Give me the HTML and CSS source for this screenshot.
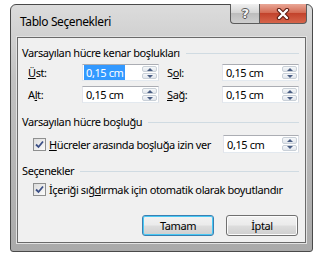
FILE: index.html
```html
<!DOCTYPE html>
<html lang="tr">

<head>
    <meta charset="UTF-8">
    <title>Tablo Seçenekleri</title>
    <link rel="stylesheet" href="styles.css">
</head>

<body>
    <div class="window">
        <div class="titlebar">
            <span class="title">Tablo Seçenekleri</span>
            <div class="caption-buttons">
                <span class="cap help">?</span>
                <span class="cap close">
                    <svg width="16" height="12" viewBox="0 0 16 12">
                        <path d="M4 2 L12 10 M12 2 L4 10" fill="none" stroke="#5a1a10" stroke-width="4.4" stroke-linecap="round" />
                        <path d="M4 2 L12 10 M12 2 L4 10" fill="none" stroke="#fff" stroke-width="2.4" stroke-linecap="round" />
                    </svg>
                </span>
            </div>
        </div>

        <div class="client">
            <div class="group-title">Varsayılan hücre kenar boşlukları</div>
            <div class="margins">
                <span class="field-label"><u>Ü</u>st:</span>
                <div class="spin"><span class="value selected">0,15 cm</span><span class="arrows"><i class="up"></i><i class="down"></i></span></div>
                <span class="field-label">S<u>o</u>l:</span>
                <div class="spin"><span class="value">0,15 cm</span><span class="arrows"><i class="up"></i><i class="down"></i></span></div>
                <span class="field-label">A<u>l</u>t:</span>
                <div class="spin"><span class="value">0,15 cm</span><span class="arrows"><i class="up"></i><i class="down"></i></span></div>
                <span class="field-label"><u>S</u>ağ:</span>
                <div class="spin"><span class="value">0,15 cm</span><span class="arrows"><i class="up"></i><i class="down"></i></span></div>
            </div>

            <div class="group-title second">Varsayılan hücre boşluğu</div>
            <div class="check-row">
                <span class="checkbox">
                    <svg width="11" height="11" viewBox="0 0 11 11">
                        <path d="M2 5.5 L4.5 8 L9 2.5" fill="none" stroke="#3b4f86" stroke-width="1.8" />
                    </svg>
                </span>
                <span><u>H</u>ücreler arasında boşluğa izin ver</span>
                <div class="spin wide"><span class="value">0,15 cm</span><span class="arrows"><i class="up"></i><i class="down"></i></span></div>
            </div>

            <div class="group-title third">Seçenekler</div>
            <div class="check-row single">
                <span class="checkbox">
                    <svg width="11" height="11" viewBox="0 0 11 11">
                        <path d="M2 5.5 L4.5 8 L9 2.5" fill="none" stroke="#3b4f86" stroke-width="1.8" />
                    </svg>
                </span>
                <span>İçeriği sığ<u>d</u>ırmak için otomatik olarak boyutlandır</span>
            </div>

            <div class="actions">
                <button class="default">Tamam</button>
                <button>İptal</button>
            </div>
        </div>
    </div>
</body>

</html>
```

FILE: styles.css
```css
body {
    margin: 0;
    background: #fff;
    font-family: "Noto Sans", "Open Sans", sans-serif;
    font-size: 11px;
    letter-spacing: -0.4px;
    white-space: nowrap;
    color: #000;
}

.window {
    box-sizing: border-box;
    width: 303px;
    height: 248px;
    margin: 4px 0 0 10px;
    border: 1px solid #4a4a4a;
    border-radius: 6px 6px 3px 3px;
    background: linear-gradient(#dcdcdc, #c2c2c2 30%, #aaaaaa);
    padding: 0 6px 8px;
    display: flex;
    flex-direction: column;
}

.titlebar {
    height: 32px;
    display: flex;
    align-items: flex-start;
}

.title {
    padding: 9px 0 0 3px;
    font-size: 12px;
    line-height: 16px;
}

.caption-buttons {
    margin: -1px -1px 0 auto;
    display: flex;
}

.cap {
    box-sizing: border-box;
    height: 20px;
    display: flex;
    align-items: center;
    justify-content: center;
    border: 1px solid #5c5c5c;
    border-top: none;
}

.help {
    width: 29px;
    border-radius: 0 0 0 4px;
    border-right: none;
    background: linear-gradient(#f0f0f0, #d6d6d6 45%, #bdbdbd 50%, #cfcfcf);
    color: #f4f4f4;
    font-family: "DejaVu Sans", sans-serif;
    font-weight: bold;
    font-size: 13px;
    text-shadow: 1px 0 #5a5a5a, -1px 0 #5a5a5a, 0 1px #5a5a5a, 0 -1px #5a5a5a;
}

.close {
    width: 48px;
    border-radius: 0 0 4px 0;
    background: linear-gradient(#e9a797, #d46c55 45%, #c2432c 50%, #d7654b);
}

.client {
    flex: 1;
    background: #f0f0f0;
    border: 1px solid #6a6a6a;
    box-shadow: 0 0 0 1px #e2e2e2;
    padding: 7px 6px 0 4px;
}

.group-title {
    display: flex;
    align-items: center;
    line-height: 15px;
}

.group-title::after {
    content: "";
    flex: 1;
    height: 1px;
    margin: 1px 0 0 6px;
    background: #d0dbe2;
}

.group-title.second {
    margin-top: 11px;
}

.group-title.third {
    margin-top: 10px;
}

.margins {
    display: grid;
    grid-template-columns: 54px 85px 55px 77px;
    row-gap: 5px;
    margin: 4px 0 0 6px;
}

.field-label {
    align-self: center;
}

.spin {
    box-sizing: border-box;
    width: 77px;
    height: 17px;
    display: flex;
    align-items: center;
    background: #fff;
    border: 1px solid;
    border-color: #abadb3 #dbdfe6 #e3e9ef #e2e3ea;
}

.spin.wide {
    width: 76px;
    height: 18px;
    margin-left: auto;
}

.value {
    margin-left: 1px;
    padding: 0 2px;
    line-height: 15px;
}

.value.selected {
    background: #3399ff;
    color: #fff;
}

.arrows {
    box-sizing: border-box;
    width: 16px;
    height: 100%;
    margin-left: auto;
    padding: 1px 1px 1px 0;
    display: flex;
    flex-direction: column;
    gap: 1px;
}

.arrows i {
    flex: 1;
    display: flex;
    align-items: center;
    justify-content: center;
    border: 1px solid #c9d0d8;
    border-radius: 2px;
    background: linear-gradient(#f6f8fa, #e1e6ec);
}

.arrows i::before {
    content: "";
    border-left: 3px solid transparent;
    border-right: 3px solid transparent;
}

.arrows .up::before {
    border-bottom: 3px solid #4a5e84;
}

.arrows .down::before {
    border-top: 3px solid #4a5e84;
}

.check-row {
    display: flex;
    align-items: center;
    margin: 6px 0 0 11px;
    line-height: 15px;
}

.check-row.single {
    margin-top: 4px;
}

.checkbox {
    box-sizing: border-box;
    width: 13px;
    height: 13px;
    margin-right: 3px;
    display: flex;
    align-items: center;
    justify-content: center;
    border: 1px solid #8e8f8f;
    background: linear-gradient(135deg, #dcdcdc, #fbfbfb);
}

.actions {
    display: flex;
    justify-content: flex-end;
    gap: 12px;
    margin: 18px 1px 0 0;
}

button {
    box-sizing: border-box;
    width: 72px;
    height: 21px;
    padding: 0;
    font-family: inherit;
    font-size: 11px;
    letter-spacing: -0.4px;
    color: #000;
    border: 1px solid #707070;
    border-radius: 3px;
    background: linear-gradient(#f2f2f2, #ebebeb 48%, #dddddd 52%, #cfcfcf);
    box-shadow: inset 0 0 0 1px #fcfcfc;
}

button.default {
    border-color: #3c7fb1;
    box-shadow: inset 0 0 0 1px #48c9f5;
}
```
